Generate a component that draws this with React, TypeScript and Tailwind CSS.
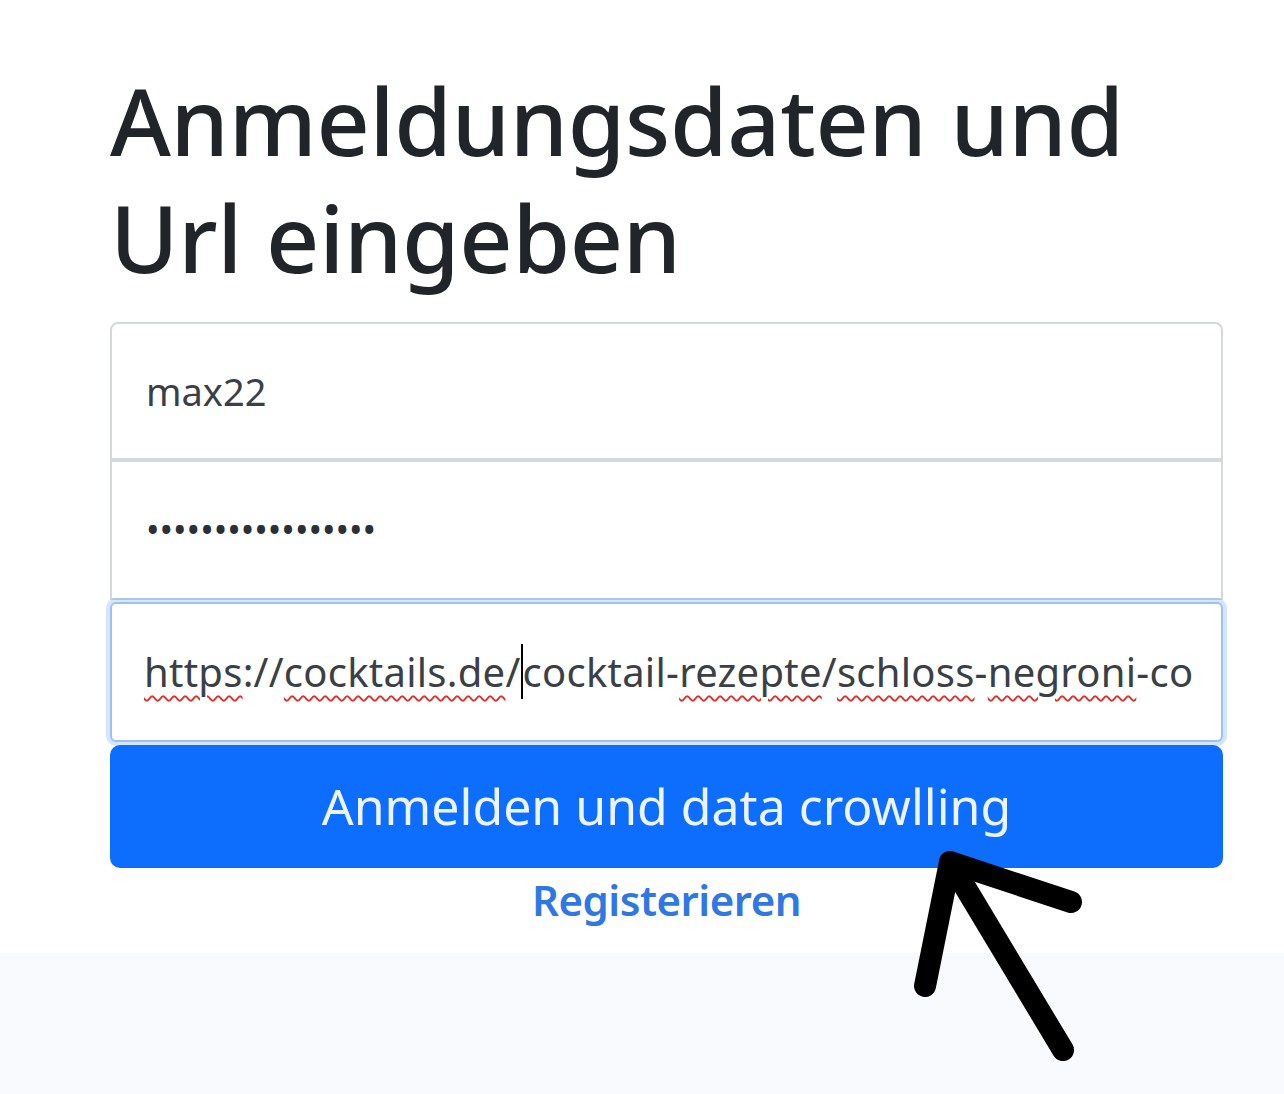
const font = { fontFamily: '"Noto Sans", "Open Sans", sans-serif' };

function Spell({ children }: { children: string }) {
  return (
    <span className="underline decoration-wavy decoration-[#e0302a] decoration-[2px] underline-offset-[8px]">
      {children}
    </span>
  );
}

export default function App() {
  return (
    <div className="relative min-h-[1094px] w-[1284px] overflow-hidden bg-[#f9fafd]" style={font}>
      <div className="h-[953px] bg-white pl-[110px] pt-[62px]">
        <h1 className="text-[93px] leading-[117px] font-medium tracking-[-0.3px] text-[#212529]">
          Anmeldungsdaten und
          <br />
          Url eingeben
        </h1>

        <div className="mt-[26px] flex w-[1113px] flex-col">
          <div className="flex h-[138px] items-center rounded-t-[8px] border-2 border-[#d4d7db] bg-white px-[34px] text-[38px] text-[#3b4046]">
            max22
          </div>
          <div className="flex h-[140px] items-center border-2 border-[#d4d7db] bg-white px-[34px] text-[36px] text-[#2b3036]">
            •••••••••••••••••
          </div>
          <div className="mt-[2px] flex h-[140px] items-center rounded-[6px] border-2 border-[#9cc1f7] bg-white px-[32px] text-[40px] text-[#3b4046] shadow-[0_0_0_4px_rgba(13,110,253,0.18)]">
            <span className="whitespace-nowrap tracking-[0.25px]">
              <Spell>https</Spell>://<Spell>cocktails.de</Spell>/
              <span className="border-l-2 border-black">c</span>ocktail-<Spell>rezepte</Spell>/<Spell>schloss</Spell>-<Spell>negroni</Spell>-co
            </span>
          </div>
          <button className="mt-[3px] flex h-[123px] w-full items-center justify-center rounded-[10px] bg-[#0d6efd] text-[50px] text-[#eef4ff]">
            Anmelden und data crowlling
          </button>
          <a className="self-center text-[42px] font-semibold text-[#2f78e4] tracking-[-0.5px]">Registerieren</a>
        </div>
      </div>

      <svg className="absolute left-0 top-0" width="1284" height="1094" viewBox="0 0 1284 1094" fill="none">
        <g stroke="#000" strokeWidth="22" strokeLinecap="round" strokeLinejoin="round">
          <path d="M925 986 L950 862 L1063 1050" />
          <path d="M950 862 L1071 902" />
        </g>
      </svg>
    </div>
  );
}
